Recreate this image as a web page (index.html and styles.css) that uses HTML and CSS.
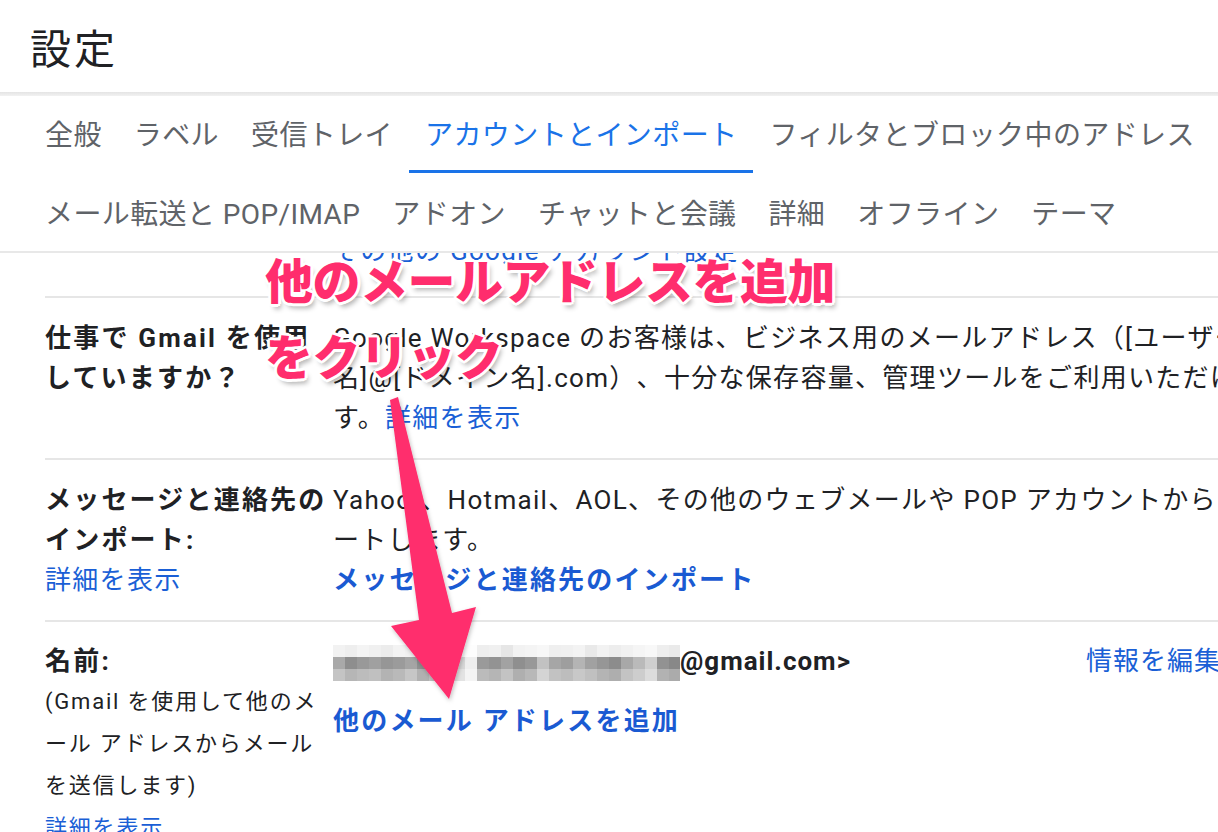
FILE: index.html
```html
<!DOCTYPE html>
<html lang="ja">
<head>
<meta charset="utf-8">
<title>設定</title>
<link rel="stylesheet" href="styles.css">
</head>
<body>
<div class="page">
  <header class="header"><h1 class="title">設定</h1></header>
  <div class="header-shadow"></div>
  <nav class="tabs">
    <div class="tab-row first">
      <span class="tab">全般</span>
      <span class="tab">ラベル</span>
      <span class="tab">受信トレイ</span>
      <span class="tab active">アカウントとインポート</span>
      <span class="tab">フィルタとブロック中のアドレス</span>
    </div>
    <div class="tab-row second">
      <span class="tab">メール転送と POP/IMAP</span>
      <span class="tab">アドオン</span>
      <span class="tab">チャットと会議</span>
      <span class="tab">詳細</span>
      <span class="tab">オフライン</span>
      <span class="tab">テーマ</span>
    </div>
  </nav>
  <main class="scroll">
    <div class="settings">
      <div class="row row-top">
        <div class="label"></div>
        <div class="value wide"><span class="link">その他の Google アカウント設定</span></div>
      </div>
      <div class="row">
        <div class="label"><b>仕事で Gmail を使用<br>していますか？</b></div>
        <div class="value wide">Google Workspace のお客様は、ビジネス用のメールアドレス（[ユーザー<br>名]@[ドメイン名].com）、十分な保存容量、管理ツールをご利用いただけま<br>す。<span class="link">詳細を表示</span></div>
      </div>
      <div class="row">
        <div class="label"><b>メッセージと連絡先の<br>インポート:</b><br><span class="link">詳細を表示</span></div>
        <div class="value wide">Yahoo!、Hotmail、AOL、その他のウェブメールや POP アカウントからインポ<br>ートします。<br><span class="link strong">メッセージと連絡先のインポート</span></div>
      </div>
      <div class="row row-name">
        <div class="label"><b>名前:</b>
          <div class="small">(Gmail を使用して他のメ<br>ール アドレスからメール<br>を送信します)<br><span class="link">詳細を表示</span></div>
        </div>
        <div class="value">
          <div class="name-line">
            <svg class="blur" width="347" height="36" viewBox="0 0 347 36" aria-hidden="true">
              <g>
                <rect x="0" y="0" width="12" height="12" fill="#f2f2f2"/><rect x="12" y="0" width="12" height="12" fill="#eeeeee"/><rect x="24" y="0" width="12" height="12" fill="#f4f4f4"/><rect x="36" y="0" width="12" height="12" fill="#f0f0f0"/><rect x="48" y="0" width="12" height="12" fill="#ececec"/><rect x="60" y="0" width="12" height="12" fill="#f3f3f3"/><rect x="72" y="0" width="12" height="12" fill="#f1f1f1"/><rect x="84" y="0" width="12" height="12" fill="#efefef"/><rect x="96" y="0" width="12" height="12" fill="#f4f4f4"/><rect x="108" y="0" width="12" height="12" fill="#f6f6f6"/><rect x="120" y="0" width="12" height="12" fill="#fbfbfb"/><rect x="132" y="0" width="12" height="12" fill="#fdfdfd"/><rect x="144" y="0" width="12" height="12" fill="#eeeeee"/><rect x="156" y="0" width="12" height="12" fill="#f0f0f0"/><rect x="168" y="0" width="12" height="12" fill="#e6e6e6"/><rect x="180" y="0" width="12" height="12" fill="#f2f2f2"/><rect x="192" y="0" width="12" height="12" fill="#f4f4f4"/><rect x="204" y="0" width="12" height="12" fill="#f7f7f7"/><rect x="216" y="0" width="12" height="12" fill="#efefef"/><rect x="228" y="0" width="12" height="12" fill="#f0f0f0"/><rect x="240" y="0" width="12" height="12" fill="#f3f3f3"/><rect x="252" y="0" width="12" height="12" fill="#e9e9e9"/><rect x="264" y="0" width="12" height="12" fill="#f2f2f2"/><rect x="276" y="0" width="12" height="12" fill="#ededed"/><rect x="288" y="0" width="12" height="12" fill="#f1f1f1"/><rect x="300" y="0" width="12" height="12" fill="#f5f5f5"/><rect x="312" y="0" width="12" height="12" fill="#f8f8f8"/><rect x="324" y="0" width="12" height="12" fill="#eeeeee"/><rect x="336" y="0" width="11" height="12" fill="#eaeaea"/>
              </g>
              <g>
                <rect x="0" y="12" width="12" height="12" fill="#a9a9a9"/><rect x="12" y="12" width="12" height="12" fill="#8e8e8e"/><rect x="24" y="12" width="12" height="12" fill="#999999"/><rect x="36" y="12" width="12" height="12" fill="#a0a0a0"/><rect x="48" y="12" width="12" height="12" fill="#969696"/><rect x="60" y="12" width="12" height="12" fill="#9b9b9b"/><rect x="72" y="12" width="12" height="12" fill="#a5a5a5"/><rect x="84" y="12" width="12" height="12" fill="#909090"/><rect x="96" y="12" width="12" height="12" fill="#aaaaaa"/><rect x="108" y="12" width="12" height="12" fill="#b8b8b8"/><rect x="120" y="12" width="12" height="12" fill="#d8d8d8"/><rect x="132" y="12" width="12" height="12" fill="#eeeeee"/><rect x="144" y="12" width="12" height="12" fill="#9a9a9a"/><rect x="156" y="12" width="12" height="12" fill="#939393"/><rect x="168" y="12" width="12" height="12" fill="#a2a2a2"/><rect x="180" y="12" width="12" height="12" fill="#8f8f8f"/><rect x="192" y="12" width="12" height="12" fill="#989898"/><rect x="204" y="12" width="12" height="12" fill="#c2c2c2"/><rect x="216" y="12" width="12" height="12" fill="#a6a6a6"/><rect x="228" y="12" width="12" height="12" fill="#9e9e9e"/><rect x="240" y="12" width="12" height="12" fill="#b4b4b4"/><rect x="252" y="12" width="12" height="12" fill="#a1a1a1"/><rect x="264" y="12" width="12" height="12" fill="#969696"/><rect x="276" y="12" width="12" height="12" fill="#8c8c8c"/><rect x="288" y="12" width="12" height="12" fill="#a8a8a8"/><rect x="300" y="12" width="12" height="12" fill="#bababa"/><rect x="312" y="12" width="12" height="12" fill="#cfcfcf"/><rect x="324" y="12" width="12" height="12" fill="#929292"/><rect x="336" y="12" width="11" height="12" fill="#888888"/>
              </g>
              <g>
                <rect x="0" y="24" width="12" height="12" fill="#c4c4c4"/><rect x="12" y="24" width="12" height="12" fill="#b6b6b6"/><rect x="24" y="24" width="12" height="12" fill="#bcbcbc"/><rect x="36" y="24" width="12" height="12" fill="#c0c0c0"/><rect x="48" y="24" width="12" height="12" fill="#b3b3b3"/><rect x="60" y="24" width="12" height="12" fill="#b9b9b9"/><rect x="72" y="24" width="12" height="12" fill="#c6c6c6"/><rect x="84" y="24" width="12" height="12" fill="#b1b1b1"/><rect x="96" y="24" width="12" height="12" fill="#c1c1c1"/><rect x="108" y="24" width="12" height="12" fill="#cccccc"/><rect x="120" y="24" width="12" height="12" fill="#e3e3e3"/><rect x="132" y="24" width="12" height="12" fill="#f4f4f4"/><rect x="144" y="24" width="12" height="12" fill="#bbbbbb"/><rect x="156" y="24" width="12" height="12" fill="#b5b5b5"/><rect x="168" y="24" width="12" height="12" fill="#c3c3c3"/><rect x="180" y="24" width="12" height="12" fill="#afafaf"/><rect x="192" y="24" width="12" height="12" fill="#b8b8b8"/><rect x="204" y="24" width="12" height="12" fill="#d4d4d4"/><rect x="216" y="24" width="12" height="12" fill="#c2c2c2"/><rect x="228" y="24" width="12" height="12" fill="#bdbdbd"/><rect x="240" y="24" width="12" height="12" fill="#c8c8c8"/><rect x="252" y="24" width="12" height="12" fill="#c0c0c0"/><rect x="264" y="24" width="12" height="12" fill="#b4b4b4"/><rect x="276" y="24" width="12" height="12" fill="#aeaeae"/><rect x="288" y="24" width="12" height="12" fill="#c3c3c3"/><rect x="300" y="24" width="12" height="12" fill="#cdcdcd"/><rect x="312" y="24" width="12" height="12" fill="#dcdcdc"/><rect x="324" y="24" width="12" height="12" fill="#b2b2b2"/><rect x="336" y="24" width="11" height="12" fill="#ababab"/>
              </g>
            </svg><b class="addr">@gmail.com&gt;</b>
          </div>
          <div class="add-line"><span class="link strong">他のメール アドレスを追加</span></div>
        </div>
        <div class="edit"><span class="link">情報を編集</span></div>
      </div>
    </div>
  </main>
</div>
<div class="note note-1">他のメールアドレスを追加</div>
<div class="note note-2">をクリック</div>
<svg class="arrow" width="1218" height="832" viewBox="0 0 1218 832" aria-hidden="true">
  <defs>
    <filter id="sh" x="-20%" y="-20%" width="140%" height="140%">
      <feDropShadow dx="1" dy="2" stdDeviation="2" flood-color="#000" flood-opacity="0.25"/>
    </filter>
  </defs>
  <polygon filter="url(#sh)" fill="#ff2d6d" points="390,400 398,397 452,613 476,607 449,699 391,626 419,620"/>
</svg>
</body>
</html>
```
FILE: styles.css
```css
* { box-sizing: border-box; }
html, body { margin: 0; padding: 0; }
body {
  width: 1218px;
  height: 832px;
  overflow: hidden;
  background: #fff;
  font-family: Roboto, "Noto Sans CJK JP", sans-serif;
  color: #202124;
  position: relative;
  text-spacing-trim: space-all;
}
.page { display: flex; flex-direction: column; height: 832px; }

/* header */
.header { height: 92px; padding-left: 30px; display: flex; align-items: center; flex-shrink: 0; }
.title { margin: 0; font-size: 41px; font-weight: 400; letter-spacing: 3px; color: #202124; }
.header-shadow { height: 4px; background: linear-gradient(#e4e4e4, #f2f2f2); flex-shrink: 0; }

/* tabs */
.tabs { border-bottom: 2px solid #e8e8e8; padding-left: 29px; flex-shrink: 0; }
.tab-row { display: flex; white-space: nowrap; }
.tab-row.first { height: 77px; }
.tab-row.second { height: 78px; }
.tab {
  font-size: 28px;
  letter-spacing: 0.4px;
  color: #5f6368;
  padding: 0 16px;
  display: flex;
  align-items: center;
}
.tab-row.first .tab { border-bottom: 3px solid transparent; }
.tab.active { color: #1a73e8; border-bottom-color: #1a73e8 !important; }

/* settings table */
.scroll { flex: 1; overflow: hidden; position: relative; }
.settings { margin-top: -22px; width: 1400px; }
.row {
  display: grid;
  grid-template-columns: 288px 753px 1fr;
  margin-left: 45px;
  border-bottom: 2px solid #e6e6e6;
  padding: 20px 0 20px;
  font-size: 26px;
  line-height: 40px;
  letter-spacing: 1.3px;
}
.row-top { padding: 0 0 25px; }
.row-name { padding-top: 19px; }
.label { white-space: nowrap; }
b { font-weight: 700; letter-spacing: 2.2px; }
.value { white-space: nowrap; }
.value.wide { grid-column: 2 / 4; }
.link { color: #1a5fd6; }
.link.strong { font-weight: 700; color: #1a5ad2; letter-spacing: 2.2px; }
.small { font-size: 22px; line-height: 42px; letter-spacing: 1.8px; }
.name-line { display: flex; align-items: center; height: 40px; }
.blur { display: block; margin-top: 3px; }
b.addr { letter-spacing: 1px; }
.add-line { margin-top: 20px; }
.edit { white-space: nowrap; letter-spacing: 1px; }

/* annotation overlay */
.note {
  position: absolute;
  font-family: "Noto Sans CJK JP", sans-serif;
  font-weight: 900;
  font-size: 48px;
  line-height: 1;
  color: #ff2d6d;
  white-space: nowrap;
  letter-spacing: -0.5px;
  text-shadow:
    3px 0 0 #fff, -3px 0 0 #fff, 0 3px 0 #fff, 0 -3px 0 #fff,
    2px 2px 0 #fff, -2px 2px 0 #fff, 2px -2px 0 #fff, -2px -2px 0 #fff,
    3px 5px 5px rgba(0,0,0,0.3);
}
.note-1 { left: 265px; top: 254px; }
.note-2 { left: 265px; top: 330px; }
.arrow { position: absolute; left: 0; top: 0; pointer-events: none; }
```
